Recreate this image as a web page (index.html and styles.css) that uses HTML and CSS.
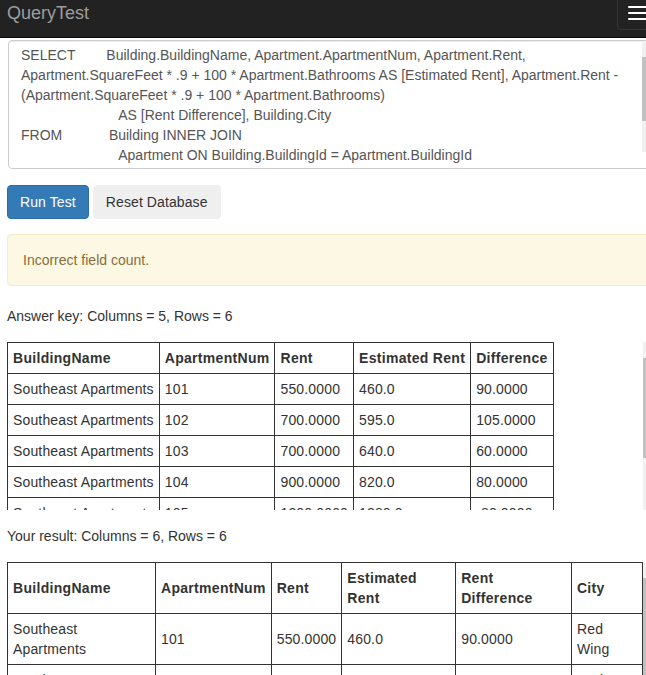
FILE: index.html
```html
<!DOCTYPE html>
<html lang="en">
<head>
<meta charset="utf-8">
<title>QueryTest</title>
<link rel="stylesheet" href="styles.css">
</head>
<body>
<div class="page">
  <nav class="navbar">
    <div class="brand">QueryTest</div>
    <button class="toggle" type="button" aria-label="Toggle navigation">
      <span class="bar"></span>
      <span class="bar"></span>
      <span class="bar"></span>
    </button>
  </nav>
  <main class="content">
    <div class="sql-box">
      <textarea class="sql" spellcheck="false">SELECT        Building.BuildingName, Apartment.ApartmentNum, Apartment.Rent, Apartment.SquareFeet * .9 + 100 * Apartment.Bathrooms AS [Estimated Rent], Apartment.Rent - (Apartment.SquareFeet * .9 + 100 * Apartment.Bathrooms)
                         AS [Rent Difference], Building.City
FROM            Building INNER JOIN
                         Apartment ON Building.BuildingId = Apartment.BuildingId




</textarea>
      <div class="sb sb-sql" aria-hidden="true"><div class="thumb thumb-sql"></div></div>
    </div>
    <div class="actions">
      <button class="btn btn-primary" type="button">Run Test</button>
      <button class="btn btn-default" type="button">Reset Database</button>
    </div>
    <div class="alert">Incorrect field count.</div>

    <p class="caption">Answer key: Columns = 5, Rows = 6</p>
    <div class="scroll-wrap">
      <div class="scroll">
        <table class="grid">
          <thead>
            <tr><th>BuildingName</th><th>ApartmentNum</th><th>Rent</th><th>Estimated Rent</th><th>Difference</th></tr>
          </thead>
          <tbody>
            <tr><td>Southeast Apartments</td><td>101</td><td>550.0000</td><td>460.0</td><td>90.0000</td></tr>
            <tr><td>Southeast Apartments</td><td>102</td><td>700.0000</td><td>595.0</td><td>105.0000</td></tr>
            <tr><td>Southeast Apartments</td><td>103</td><td>700.0000</td><td>640.0</td><td>60.0000</td></tr>
            <tr><td>Southeast Apartments</td><td>104</td><td>900.0000</td><td>820.0</td><td>80.0000</td></tr>
            <tr><td>Southeast Apartments</td><td>105</td><td>1200.0000</td><td>1280.0</td><td>-80.0000</td></tr>
          </tbody>
        </table>
      </div>
      <div class="sb" aria-hidden="true"><div class="thumb"></div></div>
    </div>

    <p class="caption">Your result: Columns = 6, Rows = 6</p>
    <div class="scroll-wrap">
      <div class="scroll">
        <table class="grid">
          <thead>
            <tr><th>BuildingName</th><th>ApartmentNum</th><th>Rent</th><th>Estimated Rent</th><th>Rent Difference</th><th>City</th></tr>
          </thead>
          <tbody>
            <tr><td>Southeast Apartments</td><td>101</td><td>550.0000</td><td>460.0</td><td>90.0000</td><td>Red Wing</td></tr>
            <tr><td>Southeast Apartments</td><td>102</td><td>700.0000</td><td>595.0</td><td>105.0000</td><td>Red Wing</td></tr>
          </tbody>
        </table>
      </div>
      <div class="sb" aria-hidden="true"><div class="thumb"></div></div>
    </div>
  </main>
</div>
</body>
</html>
```
FILE: styles.css
```css
html {
  overflow: hidden;
}

body {
  margin: 0;
  font-family: "Liberation Sans", Arial, sans-serif;
  font-size: 14px;
  line-height: 20px;
  color: #333;
  background: #fff;
}

.page {
  width: 668px;
}

.navbar {
  display: flex;
  justify-content: space-between;
  align-items: flex-start;
  height: 37px;
  background: #222;
  border-bottom: 1px solid #080808;
}

.brand {
  padding: 3px 0 0 7px;
  font-size: 18px;
  line-height: 20px;
  color: #9d9d9d;
}

.toggle {
  margin: -4px 7px 0 0;
  width: 44px;
  height: 34px;
  box-sizing: border-box;
  padding: 9px 10px;
  border: 1px solid #333;
  border-radius: 4px;
  background: transparent;
  display: flex;
  flex-direction: column;
  gap: 4px;
}

.bar {
  display: block;
  width: 22px;
  height: 2px;
  border-radius: 1px;
  background: #fff;
}

.content {
  padding: 2px 8px 0 7px;
}

/* fake scrollbar track (decorative) */
.sb {
  flex: none;
  width: 17px;
  background: #f1f1f1;
}

.thumb {
  margin-top: 16px;
  height: 100px;
  background: #c1c1c1;
}

.sql-box {
  position: relative;
  margin-left: 1px;
}

.sql {
  display: block;
  box-sizing: border-box;
  margin: 0;
  width: 100%;
  height: 129px;
  padding: 4px 29px 6px 12px;
  border: 1px solid #ccc;
  border-radius: 4px;
  box-shadow: inset 0 1px 1px rgba(0, 0, 0, 0.075);
  font-family: inherit;
  font-size: 14px;
  line-height: 20px;
  color: #555;
  background: #fff;
  overflow: hidden;
  resize: vertical;
  white-space: pre-wrap;
}

.sb-sql {
  position: absolute;
  top: 1px;
  right: 1px;
  bottom: 17px;
}

.thumb-sql {
  height: 64px;
}

.actions {
  display: flex;
  gap: 4px;
  margin-top: 16px;
}

.btn {
  padding: 6px 12px;
  font-family: inherit;
  font-size: 14px;
  line-height: 20px;
  letter-spacing: 0.1px;
  border: 1px solid transparent;
  border-radius: 4px;
  cursor: pointer;
}

.btn-primary {
  background: #337ab7;
  border-color: #2e6da4;
  color: #fff;
}

.btn-default {
  background: #efefef;
  border-color: #efefef;
  color: #333;
}

.alert {
  margin: 15px 0 20px;
  padding: 15px;
  border: 1px solid #faebcc;
  border-radius: 4px;
  background: #fcf8e3;
  color: #8a6d3b;
}

.caption {
  margin: 0 0 16px;
}

.scroll-wrap {
  display: flex;
  height: 168px;
  margin-bottom: 16px;
}

.scroll {
  width: 636px;
  flex: none;
  overflow-y: auto;
}

.grid {
  border-collapse: collapse;
}

.grid th,
.grid td {
  border: 1px solid #333;
  padding: 5px;
  text-align: left;
  vertical-align: middle;
}

.grid td {
  letter-spacing: 0.15px;
}

.grid th {
  font-weight: bold;
  letter-spacing: 0.3px;
}
```
